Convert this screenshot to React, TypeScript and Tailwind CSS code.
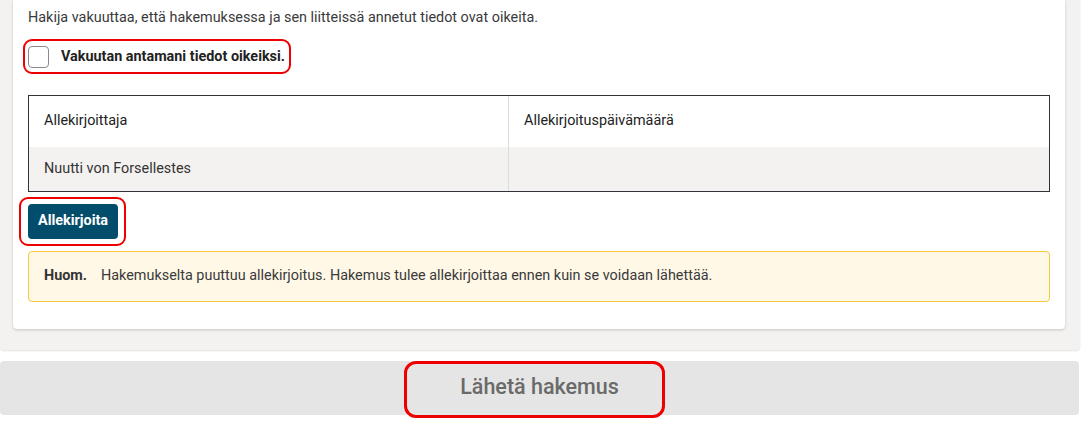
import React from "react";

export default function App() {
  return (
    <div className="w-[1088px] h-[425px] bg-white font-['Roboto','Liberation_Sans',sans-serif] text-[#333] overflow-hidden">
      <div className="w-[1080px] bg-[#f3f2f1] rounded-b-[4px] pl-[13px] pr-[15px] pb-[21px] shadow-[0_1px_2px_rgba(0,0,0,0.12)]">
        <div className="bg-white rounded-b-[4px] shadow-[0_1px_3px_rgba(0,0,0,0.18)] pt-[8px] px-[15px] pb-[27px]">
          <p className="text-[14.4px] leading-[20px] text-[#3a3a3a]">
            Hakija vakuuttaa, että hakemuksessa ja sen liitteissä annetut tiedot ovat oikeita.
          </p>

          <div className="mt-[11px] ml-[-5px] inline-flex items-center h-[35px] border-2 border-[#ee0000] rounded-[9px] pl-[3px] pr-[4px]">
            <span className="w-[21px] h-[22px] rounded-[4px] border border-[#8a8a8a] bg-white" />
            <span className="ml-[12px] text-[14.4px] font-bold text-[#222]">
              Vakuutan antamani tiedot oikeiksi.
            </span>
          </div>

          <div className="mt-[20px] border border-[#2f3337] text-[14.4px]">
            <div className="grid grid-cols-[480px_1fr]">
              <div className="h-[51px] flex items-center pl-[15px] border-r border-[#dcdcdc] text-[#222]">
                Allekirjoittaja
              </div>
              <div className="h-[51px] flex items-center pl-[15px] text-[#222]">
                Allekirjoituspäivämäärä
              </div>
              <div className="h-[44px] flex items-center pl-[15px] bg-[#f3f2f1] border-r border-[#dcdcdc] text-[#333]">
                Nuutti von Forsellestes
              </div>
              <div className="h-[44px] bg-[#f3f2f1]" />
            </div>
          </div>

          <div className="mt-[5px] ml-[-9px] inline-flex border-2 border-[#ee0000] rounded-[9px] pl-[7px] pr-[6px] py-[5px]">
            <button className="h-[35px] px-[10px] rounded-[4px] bg-[#024d6b] text-white text-[14.4px] font-bold">
              Allekirjoita
            </button>
          </div>

          <div className="mt-[5px] h-[51px] flex items-center px-[15px] bg-[#fff8e7] border border-[#f4ca3c] rounded-[4px] text-[14.4px]">
            <span className="font-bold text-[#333]">Huom.</span>
            <span className="ml-[14px] text-[#3a3a3a]">
              Hakemukselta puuttuu allekirjoitus. Hakemus tulee allekirjoittaa ennen kuin se voidaan lähettää.
            </span>
          </div>
        </div>
      </div>

      <div className="relative mt-[11px] w-[1079px] h-[54px] bg-[#e5e5e5] rounded-[4px] flex items-center justify-center">
        <span className="text-[21.5px] font-medium text-[#6a6a6a]">Lähetä hakemus</span>
        <div className="absolute left-[404px] top-0 w-[261px] h-[57px] border-[3px] border-[#ee0000] rounded-[12px]" />
      </div>
    </div>
  );
}
